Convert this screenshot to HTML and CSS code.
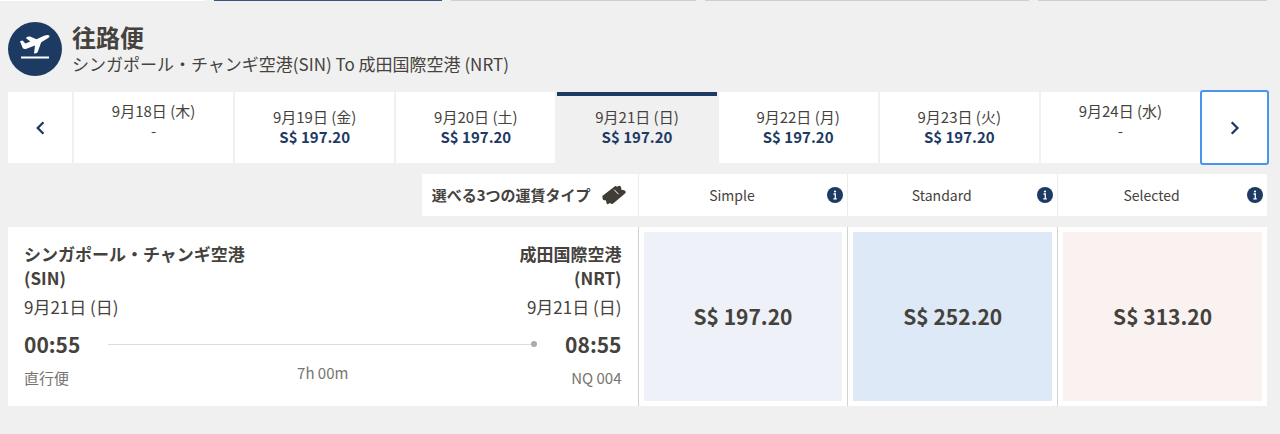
FILE: index.html
```html
<!DOCTYPE html>
<html lang="ja">
<head>
<meta charset="utf-8">
<title>往路便</title>
<link rel="stylesheet" href="styles.css">
</head>
<body>
<div class="steps" aria-hidden="true">
  <span class="step step-done"></span>
  <span class="step step-current"></span>
  <span class="step"></span>
  <span class="step"></span>
  <span class="step"></span>
</div>
<main class="page">
  <header class="heading">
    <svg class="heading-icon" viewBox="0 0 54 54" aria-hidden="true">
      <circle cx="27" cy="27" r="27" fill="#1d3a63"/>
      <path d="M12 19.2 L14.6 18.6 L17.4 21.4 L22.3 19.6 L17.8 15.9 Q19.6 14.3 22 14.5 L28.5 17.2 L35.5 14 Q39.8 12.4 41.3 13.5 Q42.2 15.1 38.6 17.1 L33.2 20.2 L29.6 30.2 Q28.4 31.4 26 31.5 L27 23.5 L17.8 27 Q15.8 27.4 14.7 26.1 Z" fill="#fff"/>
      <path d="M13 35.5H41" stroke="#fff" stroke-width="2"/>
    </svg>
    <div>
      <h1 class="title">往路便</h1>
      <p class="route">シンガポール・チャンギ空港(SIN) To 成田国際空港 (NRT)</p>
    </div>
  </header>

  <nav class="dates" aria-label="日付">
    <button class="date arrow" aria-label="前へ"><svg class="chevron" viewBox="0 0 12 14"><path d="M9 2L4 7L9 12"/></svg></button>
    <button class="date unavailable"><span>9月18日 (木)</span><span>-</span></button>
    <button class="date"><span>9月19日 (金)</span><b class="date-price">S$ 197.20</b></button>
    <button class="date"><span>9月20日 (土)</span><b class="date-price">S$ 197.20</b></button>
    <button class="date selected" aria-current="date"><span>9月21日 (日)</span><b class="date-price">S$ 197.20</b></button>
    <button class="date"><span>9月22日 (月)</span><b class="date-price">S$ 197.20</b></button>
    <button class="date"><span>9月23日 (火)</span><b class="date-price">S$ 197.20</b></button>
    <button class="date unavailable"><span>9月24日 (水)</span><span>-</span></button>
    <button class="date arrow focused" aria-label="次へ"><svg class="chevron" viewBox="0 0 12 14"><path d="M4 2L9 7L4 12"/></svg></button>
  </nav>

  <section class="columns fare-types">
    <div class="fare-label-area">
      <h2 class="fare-label">選べる3つの運賃タイプ
        <svg class="ticket" viewBox="0 0 24 20" aria-hidden="true">
          <path d="M.3 11L12.3 1.8Q13 .6 14 1Q15 2.3 16.3 1.1Q17.5 .3 18.6 1.2L19.3 3.2Q18.8 5 20.7 5.1Q22.8 4.7 23.7 6.7Q23.9 7.8 23 8.6L11.5 18.2Q10.3 19.4 9 18.8Q8.2 17.4 6.7 18.8Q5.5 19.6 4.6 18.6L4.2 16.6Q4.4 15 2.6 15.2Q1.1 15.3.7 14Z" fill="#403d36"/>
          <path d="M12.2 4.7L16.5 9.2" stroke="#fff" stroke-width="1"/>
        </svg>
      </h2>
    </div>
    <div class="fare-type"><span>Simple</span><button class="info" aria-label="Simple"><svg viewBox="0 0 16 16"><circle cx="8" cy="8" r="8" fill="#1d3a63"/><circle cx="8" cy="4.5" r="1.1" fill="#fff"/><path d="M6.5 7H8.3V11.6M6.3 11.8H9.8" fill="none" stroke="#fff" stroke-width="1.3"/></svg></button></div>
    <div class="fare-type"><span>Standard</span><button class="info" aria-label="Standard"><svg viewBox="0 0 16 16"><circle cx="8" cy="8" r="8" fill="#1d3a63"/><circle cx="8" cy="4.5" r="1.1" fill="#fff"/><path d="M6.5 7H8.3V11.6M6.3 11.8H9.8" fill="none" stroke="#fff" stroke-width="1.3"/></svg></button></div>
    <div class="fare-type"><span>Selected</span><button class="info" aria-label="Selected"><svg viewBox="0 0 16 16"><circle cx="8" cy="8" r="8" fill="#1d3a63"/><circle cx="8" cy="4.5" r="1.1" fill="#fff"/><path d="M6.5 7H8.3V11.6M6.3 11.8H9.8" fill="none" stroke="#fff" stroke-width="1.3"/></svg></button></div>
  </section>

  <section class="columns flight">
    <div class="details">
      <div class="between airport">
        <span>シンガポール・チャンギ空港<br>(SIN)</span>
        <span class="end">成田国際空港<br>(NRT)</span>
      </div>
      <div class="between day"><span>9月21日 (日)</span><span>9月21日 (日)</span></div>
      <div class="between times">
        <time class="time">00:55</time>
        <span class="track"><span class="line"></span><span class="dot"></span></span>
        <time class="time end">08:55</time>
      </div>
      <div class="meta"><span>直行便</span><span class="duration">7h 00m</span><span class="end">NQ 004</span></div>
    </div>
    <div class="fare"><button class="price simple">S$ 197.20</button></div>
    <div class="fare"><button class="price standard">S$ 252.20</button></div>
    <div class="fare"><button class="price premium">S$ 313.20</button></div>
  </section>
</main>
</body>
</html>
```
FILE: styles.css
```css
* { box-sizing: border-box; }

body {
  margin: 0;
  background: #f0f0f0;
  color: #45423d;
  font-family: "Noto Sans CJK JP", sans-serif;
  font-size: 15px;
  line-height: 20px;
}

h1, h2, p { margin: 0; }

button {
  border: 0;
  padding: 0;
  color: inherit;
  font: inherit;
  cursor: pointer;
}

.steps {
  display: grid;
  grid-template-columns: 205fr 228fr 246fr 324fr 229fr;
  gap: 9px;
  height: 1px;
  padding-right: 13px;
}
.step { background: #cfcfcf; }
.step-done { background: #fff; }
.step-current { background: #3c557e; }

.page { padding: 21px 13px 28px 8px; }

.heading {
  display: flex;
  align-items: center;
  gap: 10px;
  height: 54px;
}
.heading-icon { width: 54px; height: 54px; }
.title { font-size: 24px; line-height: 30px; }
.route { font-size: 17px; line-height: 24px; }

.dates {
  display: grid;
  grid-template-columns: 64px repeat(7, 1fr) 65px;
  gap: 2px;
  margin-top: 16px;
}
.date {
  display: flex;
  flex-direction: column;
  align-items: center;
  justify-content: center;
  min-height: 71px;
  padding-bottom: 2px;
  background: #fff;
}
.date-price { color: #1d3a63; }
.unavailable { padding-bottom: 13px; }
.arrow { padding-bottom: 0; }
.selected {
  background: #f0f0f0;
  box-shadow: inset 0 4px #1d3a63;
}
.focused {
  border-radius: 1px;
  outline: 2px solid #4795ec;
}
.chevron { width: 14px; height: 16px; }
.chevron path { fill: none; stroke: #1d3a63; stroke-width: 2; }

.columns {
  display: grid;
  grid-template-columns: 3fr 1fr 1fr 1fr;
  margin-top: 11px;
}

.fare-label-area { display: flex; justify-content: flex-end; }
.fare-label {
  display: flex;
  align-items: center;
  gap: 11px;
  padding: 0 12px 0 10px;
  background: #fff;
  font-size: 15px;
  line-height: 20px;
}
.ticket { width: 24px; height: 20px; }
.fare-type {
  display: grid;
  grid-template-columns: 1fr 16px;
  align-items: center;
  gap: 4px;
  min-height: 42px;
  padding: 0 4px 0 2px;
  border-left: 1px solid #ececec;
  background: #fff;
  font-size: 14px;
  text-align: center;
}
.info { width: 16px; height: 16px; background: none; }
.info svg { display: block; }

.flight { background: #fff; }
.details { padding: 15px 16px 17px; }
.between { display: flex; justify-content: space-between; }
.end { text-align: right; }
.airport { font-size: 17px; font-weight: bold; line-height: 24px; }
.day { margin-top: 5px; font-size: 17px; line-height: 24px; }
.times { align-items: center; gap: 28px; margin-top: 10px; }
.time { font-size: 21px; font-weight: bold; line-height: 30px; }
.track { display: flex; flex: 1; align-items: center; }
.line { flex: 1; height: 1px; background: #dcdcdc; }
.dot { width: 6px; height: 6px; border-radius: 50%; background: #aaa; }
.meta {
  display: grid;
  grid-template-columns: 1fr auto 1fr;
  margin-top: 8px;
  color: #77746f;
  line-height: 22px;
}
.duration { margin-top: -5px; }

.fare {
  display: flex;
  padding: 5px;
  border-left: 1px solid #d2d2d2;
}
.price { flex: 1; padding-bottom: 2px; font-size: 21px; font-weight: bold; }
.simple { background: #eef1f7; }
.standard { background: #dde9f7; }
.premium { background: #faf2f1; }
```
